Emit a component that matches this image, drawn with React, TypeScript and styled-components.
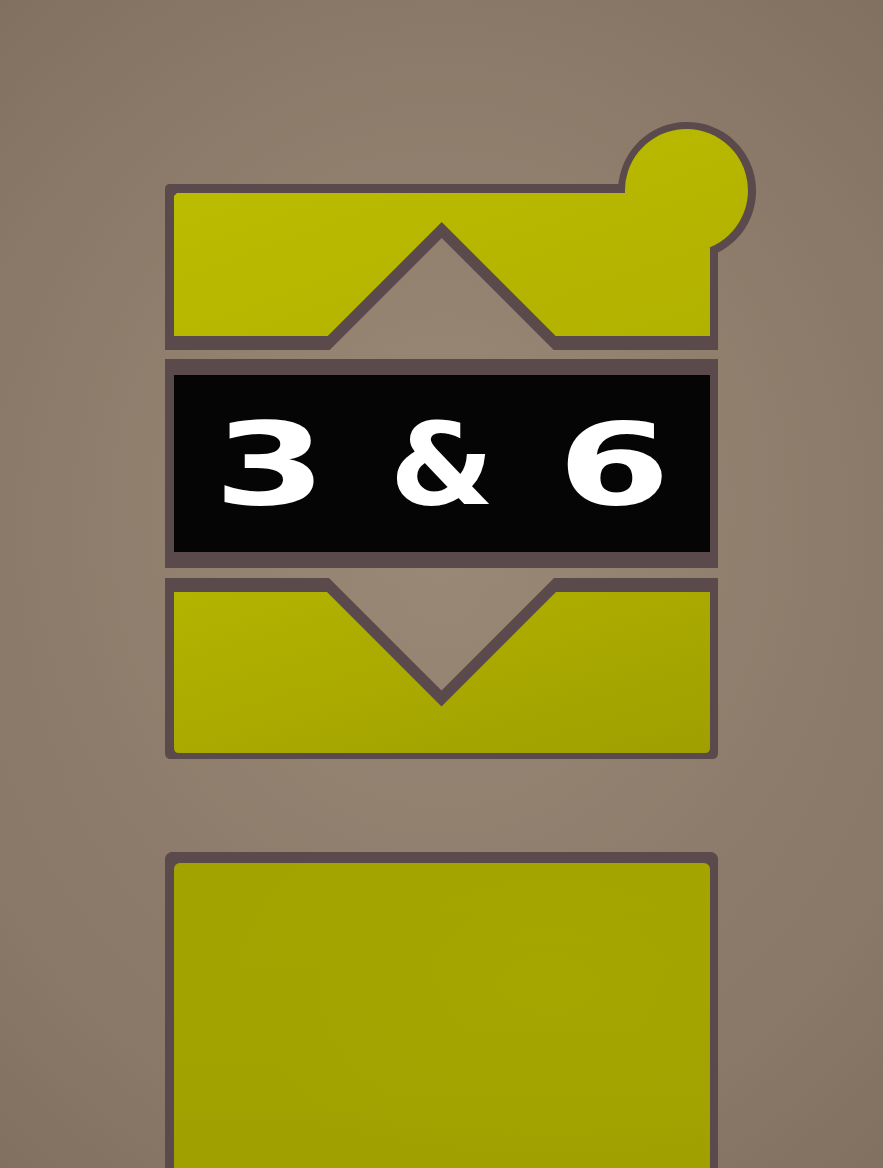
import React from "react";
import styled, { createGlobalStyle } from "styled-components";

const GlobalStyle = createGlobalStyle`
  html, body {
    margin: 0;
    padding: 0;
    overflow: hidden;
    background: #8c7b6a;
  }
  * { box-sizing: border-box; }
`;

const DARK = "#5b4a4b";

const Page = styled.main`
  width: 883px;
  height: 1168px;
  overflow: hidden;
  display: flex;
  flex-direction: column;
  align-items: center;
  padding-top: 184px;
  background:
    radial-gradient(ellipse 70% 60% at 50% 42%, rgba(160, 143, 122, 0.55) 0%, rgba(160, 143, 122, 0) 70%),
    radial-gradient(ellipse 95% 80% at 50% 50%, #928170 0%, #8a7968 60%, #7a6959 100%);
  font-family: "DejaVu Sans", "Liberation Sans", sans-serif;
`;

const Column = styled.div`
  width: 553px;
  display: flex;
  flex-direction: column;
`;

const ArrowButton = styled.button<{ $h: number; $gapAfter: number }>`
  display: block;
  width: 553px;
  height: ${(p) => p.$h}px;
  margin: 0 0 ${(p) => p.$gapAfter}px 0;
  padding: 0;
  border: none;
  background: transparent;
  cursor: pointer;
  svg {
    display: block;
    overflow: visible;
  }
`;

const Display = styled.div`
  width: 553px;
  height: 209px;
  margin-bottom: 10px;
  background: #050505;
  border-style: solid;
  border-color: ${DARK};
  border-width: 16px 8px 16px 9px;
  display: grid;
  grid-template-columns: repeat(3, 172px);
  justify-content: center;
  align-items: center;
`;

const Glyph = styled.span<{ $stretch: number }>`
  display: block;
  text-align: center;
  color: #ffffff;
  font-family: "DejaVu Sans", "Liberation Sans", sans-serif;
  font-weight: 700;
  font-size: 114px;
  line-height: 1;
  transform: translateY(1px) scaleX(${(p) => p.$stretch});
`;

const BigPanel = styled.div`
  width: 553px;
  height: 420px;
  flex-shrink: 0;
  margin-top: 93px;
  border-style: solid;
  border-color: ${DARK};
  border-width: 11px 8px 0 9px;
  border-radius: 8px 8px 0 0;
  background: ${DARK};
`;

const PanelFace = styled.div`
  width: 100%;
  height: 100%;
  border-radius: 6px 6px 0 0;
  background:
    radial-gradient(ellipse 60% 50% at 70% 30%, rgba(170, 170, 0, 0.5) 0%, rgba(170, 170, 0, 0) 100%),
    linear-gradient(180deg, #a3a300 0%, #a1a100 60%, #9c9c00 100%);
`;

const UpShape: React.FC = () => (
  <svg width="553" height="166" viewBox="0 0 553 166">
    <defs>
      <linearGradient id="upFill" x1="0" y1="0" x2="1" y2="1">
        <stop offset="0" stopColor="#bdbd00" />
        <stop offset="1" stopColor="#b1b100" />
      </linearGradient>
    </defs>
    <path
      d="M 5 0 L 453.4 0 A 69 69 0 1 1 553 68.6 L 553 166 L 388.7 166 L 276.7 54 L 164.7 166 L 0 166 L 0 5 Q 0 0 5 0 Z"
      fill={DARK}
    />
    <path
      d="M 12 9 L 460 9 A 61.5 61.5 0 1 1 545 63.3 L 545 152 L 390.7 152 L 276.7 38 L 162.7 152 L 9 152 L 9 12 Z"
      fill="url(#upFill)"
    />
  </svg>
);

const DownShape: React.FC = () => (
  <svg width="553" height="181" viewBox="0 0 553 181">
    <defs>
      <linearGradient id="downFill" x1="0" y1="0" x2="1" y2="1">
        <stop offset="0" stopColor="#b3b300" />
        <stop offset="1" stopColor="#9f9f00" />
      </linearGradient>
    </defs>
    <path
      d="M 0 0 L 164 0 L 276.5 112.5 L 389 0 L 553 0 L 553 175 Q 553 181 547 181 L 6 181 Q 0 181 0 175 Z"
      fill={DARK}
    />
    <path
      d="M 9 14 L 162 14 L 276.5 128.5 L 391 14 L 545 14 L 545 170 Q 545 175 540 175 L 14 175 Q 9 175 9 170 Z"
      fill="url(#downFill)"
    />
  </svg>
);

export default function App() {
  return (
    <>
      <GlobalStyle />
      <Page>
        <Column>
          <ArrowButton $h={166} $gapAfter={9} aria-label="Up">
            <UpShape />
          </ArrowButton>
          <Display>
            <Glyph $stretch={1.42}>3</Glyph>
            <Glyph $stretch={1.05}>&amp;</Glyph>
            <Glyph $stretch={1.42}>6</Glyph>
          </Display>
          <ArrowButton $h={181} $gapAfter={0} aria-label="Down">
            <DownShape />
          </ArrowButton>
          <BigPanel>
            <PanelFace />
          </BigPanel>
        </Column>
      </Page>
    </>
  );
}
